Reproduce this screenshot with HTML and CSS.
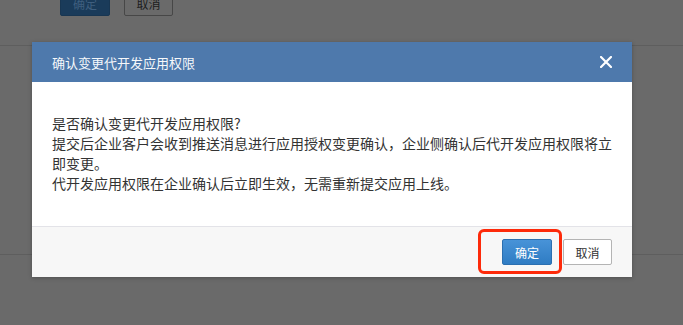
FILE: index.html
```html
<!DOCTYPE html>
<html lang="zh-CN">
<head>
<meta charset="utf-8">
<title>确认变更代开发应用权限</title>
<link rel="stylesheet" href="styles.css">
</head>
<body>
<div class="page">
  <div class="toolbar">
    <span class="bg-btn bg-btn-primary">确定</span>
    <span class="bg-btn">取消</span>
  </div>
  <div class="page-body"></div>
</div>

<div class="modal">
  <div class="modal-header">
    <span class="modal-title">确认变更代开发应用权限</span>
    <svg class="close" width="12" height="12" viewBox="0 0 12 12" aria-label="关闭">
      <path d="M1 1 L11 11 M11 1 L1 11" stroke="#ffffff" stroke-width="2.2" stroke-linecap="square" fill="none"/>
    </svg>
  </div>
  <div class="modal-body">
    <p>是否确认变更代开发应用权限?</p>
    <p>提交后企业客户会收到推送消息进行应用授权变更确认，企业侧确认后代开发应用权限将立即变更。</p>
    <p>代开发应用权限在企业确认后立即生效，无需重新提交应用上线。</p>
  </div>
  <div class="modal-footer">
    <button class="btn btn-primary">确定</button>
    <button class="btn btn-default">取消</button>
  </div>
</div>
<div class="highlight"></div>
</body>
</html>
```

FILE: styles.css
```css
html, body {
  margin: 0;
  padding: 0;
}
body {
  width: 683px;
  height: 325px;
  overflow: hidden;
  background: #6a6a6a;
  font-family: "Noto Sans CJK SC", "Noto Sans", sans-serif;
  position: relative;
}
.page {
  display: flex;
  flex-direction: column;
}
.toolbar {
  display: flex;
  gap: 14px;
  padding: 0 0 0 60px;
  margin-top: -10px;
  height: 56px;
  border-bottom: 1px solid #5e5e5e;
  box-sizing: border-box;
}
.bg-btn {
  display: flex;
  align-items: center;
  justify-content: center;
  width: 49px;
  height: 26px;
  box-sizing: border-box;
  border: 1px solid #474747;
  border-radius: 2px;
  font-size: 12px;
  color: #1c1c1c;
}
.bg-btn-primary {
  background: #1a3b5a;
  border-color: #183652;
  color: #3f5f7f;
  width: 50px;
}
.page-body {
  height: 208px;
  border-bottom: 1px solid #5e5e5e;
}

.modal {
  position: absolute;
  left: 32px;
  top: 42px;
  width: 600px;
  background: #ffffff;
  box-shadow: 0 1px 4px rgba(0, 0, 0, 0.25);
  display: flex;
  flex-direction: column;
}
.modal-header {
  height: 40px;
  background: #4e79ac;
  display: flex;
  align-items: center;
  justify-content: space-between;
  padding: 0 20px;
}
.modal-title {
  color: #ffffff;
  font-size: 13px;
  opacity: 0.95;
}
.close {
  display: block;
  margin-right: 0;
}
.modal-body {
  padding: 31px 20px 33px;
  font-size: 14px;
  line-height: 20px;
  color: #333333;
}
.modal-body p {
  margin: 0;
}
.modal-footer {
  border-top: 1px solid #e3e3e8;
  background: #f7f7f7;
  height: 50px;
  display: flex;
  align-items: center;
  justify-content: flex-end;
  gap: 11px;
  padding: 0 20px;
}
.btn {
  height: 26px;
  width: 50px;
  padding: 0;
  font-family: "Noto Sans CJK SC", sans-serif;
  font-size: 12px;
  border-radius: 2px;
  box-sizing: border-box;
  cursor: pointer;
}
.btn-primary {
  background: linear-gradient(#4893d8, #2f7cc3);
  border: 1px solid #2b6fb0;
  color: #ffffff;
}
.btn-default {
  width: 49px;
  background: #ffffff;
  border: 1px solid #b4b4b4;
  color: #333333;
}
.highlight {
  position: absolute;
  left: 478px;
  top: 229px;
  width: 84px;
  height: 45px;
  box-sizing: border-box;
  border: 3px solid #fd2a0a;
  border-radius: 6px;
}
```
